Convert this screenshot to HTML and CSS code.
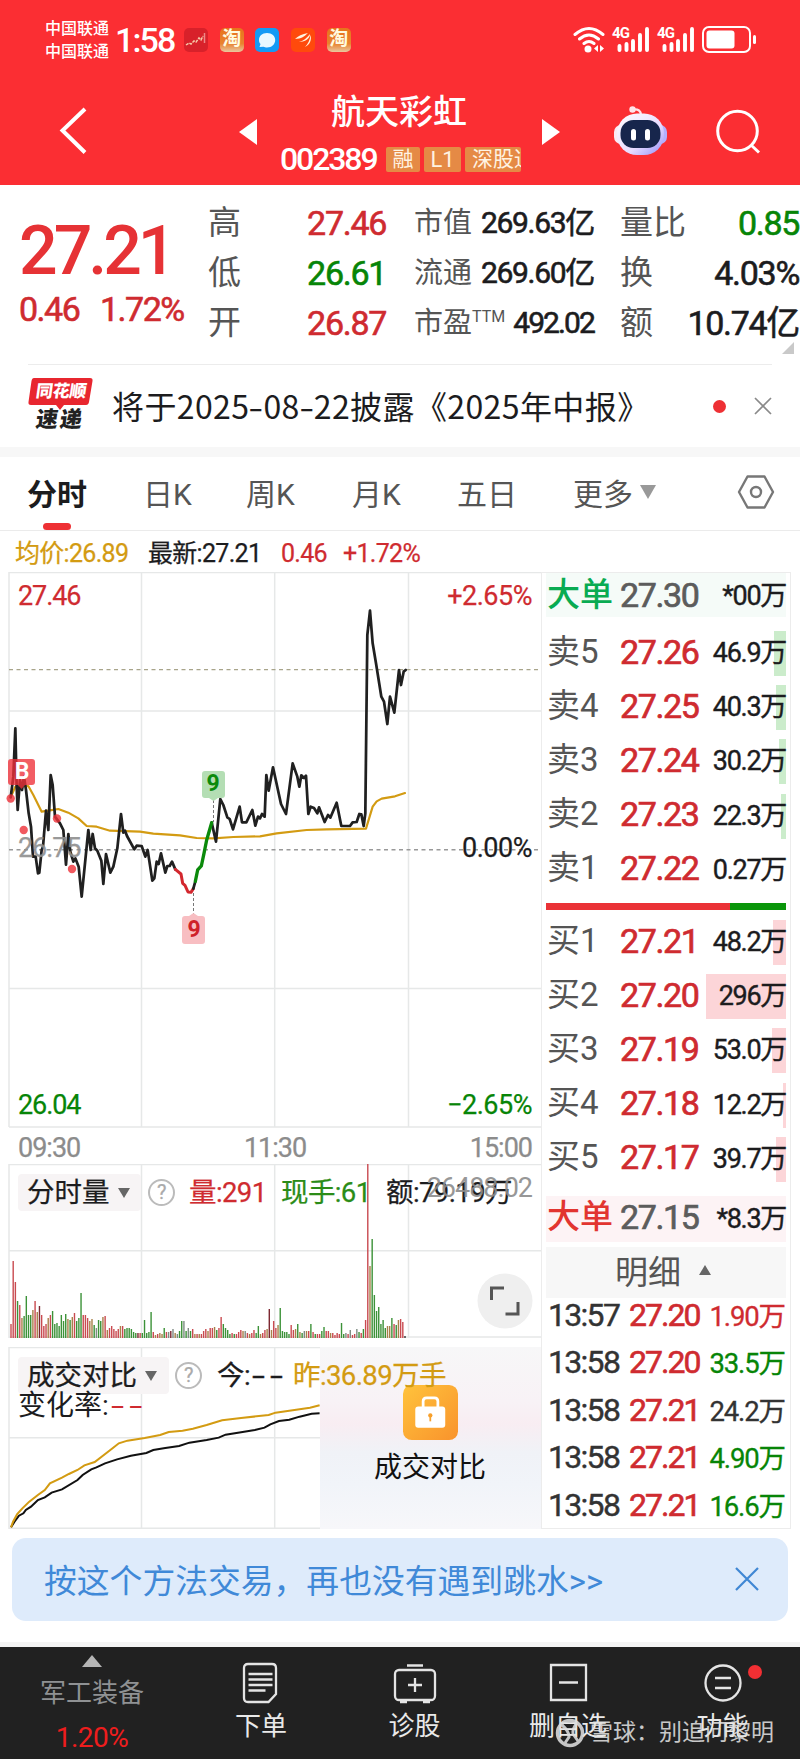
FILE: index.html
```html
<!DOCTYPE html>
<html lang="zh-CN">
<head>
<meta charset="utf-8">
<title>航天彩虹 002389</title>
<link rel="stylesheet" href="styles.css">
</head>
<body>
<header class="top">
  <div class="status">
    <div class="carriers"><span>中国联通</span><span>中国联通</span></div>
    <div class="clock">1:58</div>
    <div class="apps">
      <svg class="app" viewBox="0 0 24 24"><rect width="24" height="24" rx="5" fill="#d8212a"/><path d="M2 17l3-2 2 1 3-3 2 1 3-4 2 2 2-4" stroke="#f6c9a8" stroke-width="1.500" fill="none" stroke-dasharray="3 1"/><path d="M20.500 5v10" stroke="#e88" stroke-width="1.500"/></svg>
      <div class="app tao">淘</div>
      <svg class="app" viewBox="0 0 24 24"><rect width="24" height="24" rx="5" fill="#149af5"/><path d="M12 5c5 0 8.200 3 8.200 7S17 19.500 12 19.500c-1.500 0-2.500-.3-3.600-.8L4.500 19l1-3C4.500 15 4 13.800 4 12c0-4 3-7 8-7z" fill="#e9f8ff"/></svg>
      <svg class="app" viewBox="0 0 24 24"><rect width="24" height="24" rx="5" fill="#ff4a0c"/><path d="M4 11c3-3 7-5 13-6-3 3-7 6-13 6zM8 14c4-1 8-4 11-8 0 4-4 8-11 8zM14 19c3-3 5-7 5.500-12 1.500 5-1 10-5.500 12z" fill="#fff4e0"/></svg>
      <div class="app tao">淘</div>
    </div>
    <svg class="signals" viewBox="0 0 188 30">
      <g fill="none" stroke="#fff" stroke-width="3" stroke-linecap="round"><path d="M3 9.500q14-12 28 0M7.500 14q9.500-8 19 0M12 18.500q5-4 10 0"/></g>
      <circle cx="16" cy="24" r="3.500" fill="#fff"/><path d="M26 20v7l-4-3.500zM28 20v7l4-3.500z" fill="#fff"/>
      <g stroke="#fff" stroke-width="3.900" stroke-linecap="round"><path d="M47.500 21v4M54.500 19v6M61 16v9M68 10v15M75 4v21M92.500 21v4M99.500 19v6M106 16v9M113 10v15M120 4v21"/></g>
      <g class="g4"><text x="40" y="13">4G</text><text x="85" y="13">4G</text></g>
      <rect x="131" y="2" width="47" height="25" rx="6" fill="none" stroke="#fff" stroke-width="2"/><rect x="134.500" y="5.500" width="28" height="18" rx="3" fill="#fff"/><path d="M182.500 11.500v6" stroke="#fff" stroke-width="3" stroke-linecap="round"/>
    </svg>
  </div>
  <div class="titlebar">
    <svg class="back" viewBox="0 0 30 50"><path d="M26 4L3.500 25.500L26 47.500" fill="none" stroke="#fff" stroke-width="4"/></svg>
    <svg class="prev" viewBox="0 0 18 26"><path d="M18 0v26L0 13z" fill="#fff"/></svg>
    <div class="stock">
      <h1>航天彩虹</h1>
      <div class="codeline"><span class="code">002389</span><span class="tag">融</span><span class="tag l1">L1</span><span class="tag last">深股通</span></div>
    </div>
    <svg class="next" viewBox="0 0 18 26"><path d="M0 0v26l18-13z" fill="#fff"/></svg>
    <svg class="robot" viewBox="0 0 54 50">
      <defs><linearGradient id="rb" x1="0" y1="0" x2="1" y2="1"><stop offset="0" stop-color="#fff"/><stop offset=".6" stop-color="#e8dcff"/><stop offset="1" stop-color="#8f8cf8"/></linearGradient></defs>
      <circle cx="18.500" cy="3.500" r="3.200" fill="#ffe3ea"/><path d="M19 3.500q8-1 8 6" fill="none" stroke="#ffe3ea" stroke-width="2.200"/>
      <rect x="0" y="19" width="14" height="19" rx="7" fill="#fbeaf3"/><rect x="39" y="19" width="14" height="19" rx="7" fill="#b3b0ff"/>
      <rect x="3" y="7.500" width="47" height="41.500" rx="20" fill="url(#rb)"/><rect x="6.500" y="14" width="40" height="28" rx="13" fill="#17264c"/>
      <rect x="17" y="23" width="5" height="11.500" rx="2.500" fill="#fff"/><rect x="31" y="23" width="5" height="11.500" rx="2.500" fill="#fff"/>
    </svg>
    <svg class="search" viewBox="0 0 46 46"><circle cx="22.500" cy="22" r="19.800" fill="none" stroke="#fff" stroke-width="3"/><path d="M36 36l8 7.500" stroke="#fff" stroke-width="3"/></svg>
  </div>
</header>

<section class="quote">
  <div class="main"><div class="price">27.21</div><div class="chg"><span>0.46</span><span>1.72%</span></div></div>
  <dl class="c2"><dt>高</dt><dd class="r">27.46</dd><dt>低</dt><dd class="g">26.61</dd><dt>开</dt><dd class="r">26.87</dd></dl>
  <dl class="c3"><dt>市值</dt><dd>269.63亿</dd><dt>流通</dt><dd>269.60亿</dd><dt>市盈<sup>TTM</sup></dt><dd>492.02</dd></dl>
  <dl class="c4"><dt>量比</dt><dd class="g">0.85</dd><dt>换</dt><dd>4.03%</dd><dt>额</dt><dd>10.74亿</dd></dl>
  <i class="corner"></i>
</section>

<section class="news">
  <div class="logo"><svg viewBox="0 0 66 32"><path d="M6 0H62q3 0 2.500 3L61 24q-.5 3-3 3H36l-4 5-4-5H3q-3 0-2.500-3L3.500 3Q4 0 6 0z" fill="#e8262f"/></svg><b class="l-a">同花顺</b><b class="l-b">速递</b></div>
  <p>将于2025<u>-</u>08<u>-</u>22披露《2025年中报》</p>
  <i class="dot"></i>
  <svg class="x" viewBox="0 0 18 18"><path d="M1 1l16 16M17 1L1 17" stroke="#8a8a8a" stroke-width="1.700"/></svg>
</section>

<nav class="tabs">
  <span class="on">分时</span><span>日K</span><span>周K</span><span>月K</span><span>五日</span><span class="more">更多</span>
  <svg class="dd" viewBox="0 0 16 14"><path d="M0 0h16L8 14z" fill="#999"/></svg>
  <svg class="hex" viewBox="0 0 38 34"><path d="M10.500 1.500h17L36 17l-8.500 15.500h-17L2 17z" fill="none" stroke="#777" stroke-width="2.400" stroke-linejoin="round"/><circle cx="19" cy="17" r="5" fill="none" stroke="#777" stroke-width="2.400"/></svg>
</nav>

<main class="body">
  <div class="left">
    <div class="legend"><span class="gold">均价:26.89</span><span class="k">最新:27.21</span><span class="r">0.46</span><span class="r">+1.72%</span></div>

    <div class="chart">
      <svg class="plot" viewBox="0 572 541 556">
        <path class="grid" d="M9 572.500H541M9 711H541M9 988.500H541M9 1127H541M9 572V1127M141.500 572V1127M274.700 572V1127M408.500 572V1127"/>
        <path class="dash tan" d="M9 669.600H541"/><path class="dash" d="M9 849.800H541"/>
        <g transform="translate(0 660) scale(.33333)">
          <path class="ln avg" d="M32 412L46 380L85 378L100 405L125 455L145 452L175 447L205 458L235 475L260 498L290 500L330 512L420 515L460 521L540 526L590 534L640 535L700 531L780 529L830 520L920 510L980 508L1098 506L1118 440L1130 424L1145 416L1185 409L1215 399"/>
          <path class="ln px" d="M32 412L40 350L46 205L50 380L53 450L60 360L66 390L72 350L78 390L86 460L93 500L99 590L107 590L114 640L118 638L125 570L129 560L138 452L145 510L152 345L158 375L165 470L180 490L190 510L198 614L205 522L211 575L220 605L226 595L236 620L245 710L265 510L272 570L278 522L285 565L292 572L304 602L310 672L318 582L331 638L340 620L352 565L363 462L370 518L375 512L381 528L403 568L410 557L425 558L436 590L443 570L457 662L463 655L470 605L476 612L483 580L496 638L502 618L509 618L516 605L526 628"/>
          <path class="ln rd" d="M526 628L543 642L548 670L555 676L564 696L573 697L580 686"/>
          <path class="ln px" d="M580 686L586 664M635 488L648 545L661 417L670 435L682 472L689 477L699 508L719 440L726 487L739 487L757 450L766 497L774 470L780 475L786 462L794 470L799 345L806 392L819 322L843 432L858 462L878 310L892 350L898 380L904 346L912 354L918 347L925 462L932 440L942 444L952 460L957 442L974 486L984 465L991 473L1010 428L1024 498L1050 498L1058 487L1070 486L1078 462L1084 463L1091 498L1096 460L1102 -75L1110 -148L1118 -50L1128 10L1144 110L1152 125L1162 192L1170 110L1183 158L1197 30L1203 75L1211 35L1217 30"/>
          <path class="ln gn" d="M586 664L593 630L604 618L612 580L620 540L635 488"/>
        </g>
        <path class="lead" d="M213.500 800V822M193.500 893V914"/>
        <path d="M205 771h17q3 0 3 3v21q0 3-3 3h-4l-4.500 3-4.500-3h-4q-3 0-3-3v-21q0-3 3-3z" fill="#b4deb4"/>
        <path d="M185 916h4l4.500-3 4.500 3h4q3 0 3 3v22q0 3-3 3h-17q-3 0-3-3v-22q0-3 3-3z" fill="#f8bec2"/>
        <path d="M11 759h21q3 0 3 3v20q0 3-3 3h-7l-3.500 4-3.500-4h-7q-3 0-3-3v-20q0-3 3-3z" fill="#ee3038" opacity=".78"/>
        <g fill="#ee3038" opacity=".8"><circle cx="10.700" cy="798.500" r="4.200"/><circle cx="23.700" cy="830" r="4.200"/><circle cx="57" cy="818.500" r="4.200"/><circle cx="72" cy="869" r="4.200"/></g>
      </svg>
      <span class="lab hi r">27.46</span><span class="lab hi rt r">+2.65%</span>
      <span class="lab mid gray">26.75</span><span class="lab mid rt">0.00%</span>
      <span class="lab lo g">26.04</span><span class="lab lo rt g">−2.65%</span>
      <b class="mk b">B</b><b class="mk n1">9</b><b class="mk n2">9</b>
    </div>

    <div class="times"><span>09:30</span><span>11:30</span><span>15:00</span></div>

    <div class="vol">
      <svg class="plot" viewBox="0 1164 541 174"><path class="grid" d="M9 1164.500H541M9 1250.700H541M9 1337H541M9 1164V1338M141.500 1164V1338M274.700 1164V1338M408.500 1164V1338"/></svg>
      <div class="head"><span class="chip">分时量<i></i></span><em>?</em><span class="r">量:291</span><span class="g2">现手:61</span><span class="k">额:79.19万</span></div>
      <span class="max">26488.02</span>
      <svg class="plot" id="bars" viewBox="0 1164 541 174"></svg>
      <svg class="expand" viewBox="0 0 56 56"><circle cx="28" cy="28" r="27.500" fill="#efefef"/><path d="M14.500 27V15H27M41 29V41H28.500" fill="none" stroke="#555" stroke-width="3"/></svg>
    </div>

    <div class="cmp">
      <svg class="plot" viewBox="0 1347 541 182"><path class="grid" d="M9 1347.500H541M9 1437.700H541M9 1528.300H541M9 1347V1529M141.500 1347V1529M274.700 1347V1529"/>
        <g transform="translate(0 1340) scale(.3444 .33333)" fill="none" stroke-width="6">
          <path stroke="#111" d="M32 562L42 545L55 527L68 520L75 510L90 500L110 480L130 472L150 458L180 448L225 420L240 405L265 388L280 382L305 370L340 358L380 347L425 339L445 330L480 324L520 318L550 308L600 300L635 293L655 284L700 277L740 270L768 263L785 253L810 243L840 239L870 230L905 221L928 220"/>
          <path stroke="#d39b12" d="M32 562L38 545L50 522L65 505L85 485L110 465L130 450L145 430L180 413L200 402L225 390L245 376L275 366L295 350L325 326L345 310L370 302L420 294L465 285L490 276L530 272L560 266L600 255L645 241L700 234L780 225L800 218L850 211L900 203L928 196"/>
        </g></svg>
      <div class="lock"><svg viewBox="0 0 56 56"><defs><linearGradient id="lk" x1="0" y1="0" x2="1" y2="1"><stop offset="0" stop-color="#ffc33c"/><stop offset="1" stop-color="#f9932c"/></linearGradient></defs><rect width="56" height="56" rx="9" fill="url(#lk)"/><path d="M20.500 23V16.500q0-3.500 3.500-3.500h8q3.500 0 3.500 3.500V23" fill="none" stroke="#fff" stroke-width="2.800"/><rect x="12.500" y="22" width="30.500" height="21.500" rx="3" fill="#fff"/><circle cx="27.800" cy="31" r="2.200" fill="#f7a02c"/><path d="M27.800 31v6" stroke="#f7a02c" stroke-width="1.800"/></svg><span>成交对比</span></div>
      <div class="head"><span class="chip">成交对比<i></i></span><em>?</em><span class="k">今:<u>--</u></span><span class="gold">昨:36.89万手</span></div>
      <div class="rate">变化率:<u class="r">--</u></div>
    </div>
  </div>

  <aside class="book">
    <div class="row big sellbig"><span>大单</span><b>27.30</b><i>*00万</i></div>
    <div class="asks">
      <div class="row"><span>卖5</span><b>27.26</b><i>46.9万</i><s style="width:12px"></s></div>
      <div class="row"><span>卖4</span><b>27.25</b><i>40.3万</i><s style="width:10px"></s></div>
      <div class="row"><span>卖3</span><b>27.24</b><i>30.2万</i><s style="width:7px"></s></div>
      <div class="row"><span>卖2</span><b>27.23</b><i>22.3万</i><s style="width:5px"></s></div>
      <div class="row"><span>卖1</span><b>27.22</b><i>0.27万</i></div>
    </div>
    <div class="ratio"></div>
    <div class="bids">
      <div class="row"><span>买1</span><b>27.21</b><i>48.2万</i><s style="width:13px"></s></div>
      <div class="row"><span>买2</span><b>27.20</b><i>296万</i><s style="width:80px"></s></div>
      <div class="row"><span>买3</span><b>27.19</b><i>53.0万</i><s style="width:14px"></s></div>
      <div class="row"><span>买4</span><b>27.18</b><i>12.2万</i><s style="width:3px"></s></div>
      <div class="row"><span>买5</span><b>27.17</b><i>39.7万</i><s style="width:10px"></s></div>
    </div>
    <div class="row big buybig"><span>大单</span><b>27.15</b><i>*8.3万</i></div>
    <div class="detail">明细<svg viewBox="0 0 12 10"><path d="M6 0l6 10H0z" fill="#666"/></svg></div>
    <div class="ticks">
      <div><span>13:57</span><b>27.20</b><i class="r">1.90万</i></div>
      <div><span>13:58</span><b>27.20</b><i class="g">33.5万</i></div>
      <div><span>13:58</span><b>27.21</b><i>24.2万</i></div>
      <div><span>13:58</span><b>27.21</b><i class="g">4.90万</i></div>
      <div><span>13:58</span><b>27.21</b><i class="g">16.6万</i></div>
    </div>
  </aside>
</main>

<div class="banner"><span>按这个方法交易，再也没有遇到跳水&gt;&gt;</span><svg viewBox="0 0 24 24"><path d="M1 1l22 22M23 1L1 23" stroke="#3f87d4" stroke-width="2.200"/></svg></div>

<footer class="nav">
  <div class="sector"><svg viewBox="0 0 20 12"><path d="M10 0l10 12H0z" fill="#b5b5b5"/></svg><span>军工装备</span><b>1.20%</b></div>
  <div class="item"><svg viewBox="0 0 44 44"><path d="M9 3h24q4 0 4 4v26l-7.500 8H9q-4 0-4-4V7q0-4 4-4zM9.500 13h24M9.500 18.500h24M9.500 24h24M9.500 29.500h17" /></svg><span>下单</span></div>
  <div class="item"><svg viewBox="0 0 44 44"><rect x="2" y="9" width="40" height="30" rx="4"/><path d="M14 4.500h16M22 17v14M15 24h14M7 41h7M30 41h7"/></svg><span>诊股</span></div>
  <div class="item"><svg viewBox="0 0 44 44"><path d="M5 4h35v35H5zM13 21.500h19"/></svg><span>删自选</span></div>
  <div class="item"><svg viewBox="0 0 44 44"><circle cx="22" cy="22" r="17.500"/><path d="M14 17h16M14 27h16"/></svg><span>功能</span><i class="nd"></i></div>
  <div class="mark"><svg viewBox="0 0 30 30"><circle cx="15" cy="15" r="12.500" fill="none" stroke="#ddd" stroke-width="3.500"/><path d="M7 7q7 6 7 12l-4 6M22 5q-5 6-4 11l5 7" fill="none" stroke="#ddd" stroke-width="3"/></svg><span>雪球：别追问黎明</span></div>
</footer>
<script src="bars.js"></script>
</body>
</html>
```
FILE: styles.css
```css
*{box-sizing:border-box;margin:0;padding:0}
body{width:800px;height:1759px;overflow:hidden;background:#fff;font-family:Roboto,"Noto Sans CJK SC",sans-serif;color:#1c1c1e}
svg{display:block;flex:none}
i,em{font-style:normal}
u,s{text-decoration:none}
.r{color:#cf2b30}.g{color:#078507}.g2{color:#2b8c17}.k{color:#1c1c1e}.gold{color:#d39b12}

.top{height:184.500px;background:#fb2e33;color:#fff}
.status{height:80px;display:flex;align-items:center;padding-left:45px;position:relative}
.carriers{display:flex;flex-direction:column;width:70px;font-size:16px;line-height:23.500px;font-weight:500}
.clock{width:69px;font-size:34px;letter-spacing:-1.900px;font-weight:500}
.apps{display:flex;gap:11.700px;width:388px}
.app{width:24px;height:24px}
.tao{border-radius:5px;background:linear-gradient(#e8731c,#e9822e 65%,#e9c8a0);font-size:19px;line-height:22px;text-align:center;font-weight:700;color:#fffbe0}
.signals{width:188px;height:30px}
.g4{font-size:15px;font-weight:700;fill:#fff;letter-spacing:-.8px}
.titlebar{height:104px;display:flex;align-items:flex-start}
.back{width:30px;height:50px;margin:25px 0 0 59px}
.prev{width:18px;height:26px;margin:39px 0 0 150px}
.stock{width:242px;margin-left:23px;height:100px;padding-top:7px}
.stock h1{font-size:34px;line-height:50px;height:50px;font-weight:500;padding-left:51px}
.codeline{display:flex;align-items:center;height:44px;gap:4px;overflow:hidden}
.code{font-size:32px;font-weight:500;letter-spacing:-2.100px;width:102px;line-height:44px}
.tag{height:25px;flex:none;background:#e58a45;border-radius:2px;font-size:21px;line-height:25px;width:34px;text-align:center;color:#fff3e2}
.tag.l1{width:37px;font-size:22px}.tag.last{width:56px;overflow:hidden;white-space:nowrap;text-align:left;padding-left:7px}
.next{width:18px;height:26px;margin:39px 0 0 20px}
.robot{width:54px;height:50px;margin:26px 0 0 54px}
.search{width:46px;height:46px;margin:29px 0 0 47px}

.quote{height:179.500px;display:flex;padding-top:13px;position:relative}
.main{width:208px;padding-left:19px;color:#cf2b30}
.price{font-size:68px;line-height:76px;margin-top:15px;font-weight:500;letter-spacing:-4px;color:#e63235}
.chg{display:flex;font-size:34px;line-height:38px;letter-spacing:-1.500px;padding-top:1px}
.chg span:first-child{width:81px}
.quote dl{display:grid;grid-template-rows:repeat(3,50.400px);align-items:center;line-height:50px;font-size:34px}
.quote dt{color:#555;font-size:33px;white-space:nowrap}
.quote dd{text-align:right;letter-spacing:-1.300px;-webkit-text-stroke:.6px;white-space:nowrap}
.c2{width:178px;grid-template-columns:60px 118px}
.quote .c2 dd,.chg{-webkit-text-stroke:.6px}
.c3{width:208px;padding-left:28px;grid-template-columns:55px 125px}
.quote .c3 dt{font-size:29px}.quote .c3 dd{font-size:30px}
.c3 sup{font-size:16px;vertical-align:top;position:relative;top:-6px}
.quote .c3 dd:last-child{letter-spacing:-1.900px}
.c4{width:205px;padding-left:26px;grid-template-columns:60px 119px}
.corner{position:absolute;right:6px;top:157px;border:6.500px solid;border-color:transparent #c9c9c9 #c9c9c9 transparent}

.news{height:83px;margin:0 28px;border-top:1px solid #ececec;display:flex;align-items:center;position:relative}
.logo{width:66px;height:54px;margin-top:-2px;position:relative;color:#222}
.logo svg{width:66px;height:32px}
.logo b{position:absolute;transform:skewX(-8deg);white-space:nowrap;font-weight:900}
.l-a{left:8px;top:1px;font-size:17px;line-height:25px;color:#fff;letter-spacing:-.300px}
.l-b{left:8px;top:29px;font-size:22px;line-height:26px;letter-spacing:2px}
.news p{margin:-3px 0 0 18px;font:400 32px/48px "Noto Sans CJK SC",sans-serif;letter-spacing:.400px;width:601px;white-space:nowrap}
.news u{display:inline-block;width:14px;text-align:center;transform:scaleX(1.35)}
.dot{width:13px;height:13px;border-radius:50%;background:#ee3034}
.news .x{width:18px;height:18px;margin-left:28px}

.tabs{height:84px;border-top:10px solid #f7f7f7;border-bottom:1px solid #ebebeb;display:grid;grid-template-columns:116px 103px 106px 105px 116px 67px 97px 1fr;padding-left:27px;padding-bottom:3px;align-items:center;font-size:30px;color:#555;position:relative}
.tabs .on{font-weight:700;color:#1c1c1e}
.tabs .on::after{content:"";position:absolute;left:43px;bottom:0;width:28px;height:7px;border-radius:4px;background:#ee3034}
.dd{width:16px;height:14px}.hex{width:38px;height:34px}

.body{display:flex;height:998px}
.left{width:541px}
.legend{height:41px;display:grid;grid-template-columns:133px 133px 62px 100px;padding-left:15px;align-items:center;font-size:25px;line-height:41px;letter-spacing:-.700px;padding-top:2px}
.legend,.lab,.head,.times{-webkit-text-stroke:.25px}
.chart,.vol,.cmp{position:relative;width:541px}
.chart{height:556px}
.plot{position:absolute;left:0;top:0;width:541px;height:100%}
.grid{fill:none;stroke:#e6e8e8;stroke-width:1.500}
.dash{fill:none;stroke:#999;stroke-width:1.400;stroke-dasharray:4 3.500}
.tan{stroke:#a8a48a}
.lead{stroke:#777;stroke-dasharray:3 2}
.ln{fill:none;stroke-width:8.200;stroke-linejoin:round;stroke-linecap:round}
.px{stroke:#202020}.avg{stroke:#d39b12;stroke-width:6.500}.rd{stroke:#d3272e;stroke-width:9}.gn{stroke:#0b8a0b;stroke-width:10}
.lab{position:absolute;left:18px;font-size:27px;line-height:32px;letter-spacing:-1.100px}
.lab.rt{left:auto;right:9px;letter-spacing:-.500px}
.hi{top:8px}.mid{top:260px}.lo{top:517px}
.gray{color:#8f8f8f;opacity:.9}
.mk{position:absolute;width:28px;text-align:center;font-size:23px;line-height:26px}
.mk.b{left:8px;top:187px;color:#fff}.n1{left:199px;top:199px;color:#0b8a0b}.n2{left:180px;top:345px;color:#cf2229}
.times{height:36px;display:flex;justify-content:space-between;padding:3px 9px 0 18px;font-size:27px;line-height:34px;color:#8c8c8c;letter-spacing:-1px}
.vol{height:183px}.vol .plot{height:174px}
.head{position:absolute;left:18px;top:9px;height:37px;display:grid;grid-template-columns:130px 41px 92px 105px 130px;align-items:center;font-size:27.500px;line-height:39px;letter-spacing:-.600px;white-space:nowrap}
.chip{width:123px;height:37px;background:#f7f4f5;border-radius:4px;padding-left:9px;letter-spacing:0;font-size:27.500px;display:flex;align-items:center;gap:8px}
.chip i{border:6.500px solid transparent;border-top:10px solid #666;border-bottom:0}
.head em{width:27px;height:27px;border:2px solid #bbb;border-radius:50%;color:#aaa;font-size:20px;line-height:23px;text-align:center}
.max{position:absolute;right:9px;top:8px;font-size:27px;line-height:32px;color:#8c8c8c;letter-spacing:-1px;opacity:.9}
.expand{position:absolute;left:477px;top:109px;width:56px;height:56px}
.cmp{height:182px}
.cmp .chip{width:151px}.cmp .head{grid-template-columns:157px 42px 76px 160px}
.cmp u{display:inline-block;transform:scaleX(1.7);transform-origin:0 50%;letter-spacing:3px;margin-left:2px}
.rate{position:absolute;left:18px;top:40px;font-size:28px;line-height:38px}
.lock{position:absolute;left:320px;top:0;width:221px;height:182px;background:linear-gradient(#f7f7f8,#f8f2f6 30%,#f8edf2 42%,#f0f2f7 58%,#f1f4f9 75%,#f7f7fa);padding-top:38px}
.lock svg{width:55px;height:55px;margin-left:83px}
.lock span{display:block;margin:8px 0 0 54px;font-size:28px;line-height:40px;color:#111}

.book{width:250px;border:1px solid #ececec;padding:0 4px;height:957px;margin-top:41px}
.book i,.book b{font-weight:400}
.row{display:grid;grid-template-columns:73px 80px 1fr;height:54.200px;align-items:center;position:relative;padding-left:1px;line-height:46px;white-space:nowrap}
.row span{font-size:33px;color:#555;margin-top:-3px}
.row b{font-size:34px;color:#cf2b30;letter-spacing:-1.400px;margin-top:-3px;-webkit-text-stroke:.7px}
.row i{font-size:27px;text-align:right;letter-spacing:-1.300px;position:relative;z-index:1;-webkit-text-stroke:.4px}
.row s{position:absolute;right:0;top:5px;height:45px}
.asks s{background:#cbeccb}.bids s{background:#fcd5d8}
.big{height:44px}.big span{font-weight:500}.big b{color:#5c5c5c}
.sellbig{background:#f5fbf8}.sellbig span{color:#09ab52}
.buybig{background:#fdf3f5;height:46px}.buybig span{color:#e23530}
.asks{padding-top:9px}
.ratio{height:7px;margin-top:6px;background:linear-gradient(90deg,#ea3236 76.500%,#0a960a 0)}
.bids{padding-top:5px;height:286px}
.detail{margin-top:5px;height:51px;background:#f7f7f7;display:flex;align-items:center;gap:18px;padding:0 0 4px 69px;font-size:33px;color:#555}
.detail svg{width:12px;height:10px}
.ticks div{display:grid;grid-template-columns:79px 74px 1fr;height:47.500px;line-height:34px;padding-left:2px;white-space:nowrap}
.ticks span{font-size:32px;letter-spacing:-1.700px;color:#333;-webkit-text-stroke:.4px}
.ticks b{font-size:32px;letter-spacing:-2px;color:#cf2b30;padding-left:2px;-webkit-text-stroke:.6px}
.ticks i{font-size:27.500px;text-align:right;letter-spacing:-1.100px;padding:2px 1px 0 0;color:#333;-webkit-text-stroke:.3px}
.ticks i.r{color:#cf2b30}.ticks i.g{color:#078507}

.banner{height:83px;margin:9px 12px 0;border-radius:14px;background:#deebfb;display:flex;align-items:center;justify-content:space-between;padding:0 29px 2px 32px;color:#4089d8;font-size:32.800px}
.banner svg{width:24px;height:24px}

.nav{height:117px;margin-top:21px;border-top:5px solid #f4f4f4;background:#212121;display:grid;grid-template-columns:184px 154px 153px 154px 155px;position:relative}
.sector{display:flex;flex-direction:column;align-items:center;color:#8f9193;font-size:26px;padding-top:8px}
.sector svg{width:20px;height:12px}
.sector span{line-height:38px;margin-top:7px}
.sector b{font-weight:400;color:#ee1d1d;font-size:28px;line-height:40px;margin-top:6px;letter-spacing:-.500px}
.item{display:flex;flex-direction:column;align-items:center;padding-top:14px;font-size:26px;color:#e9e9e9;position:relative}
.item svg{width:44px;height:44px;fill:none;stroke:#e4e4e4;stroke-width:2.300}
.item span{line-height:38px;margin-top:2px}
.nd{position:absolute;left:103px;top:18px;width:14px;height:14px;border-radius:50%;background:#f22f33}
.mark{position:absolute;left:555px;top:71px;display:flex;align-items:center;color:#e0e0e0;font-size:23px;line-height:30px;opacity:.88}
.mark svg{width:30px;height:30px;margin-right:5px}
```
FILE: bars.js
```js
// Minute volume bars: colour key followed by bar height in pixels.
const data = (
  "r14 r77 r56 g37 r33 o20 g22 g42 g23 g23 o28 r37 o26 d32 r23 r12 r14 o20 r23 g27 g14 g15 g12 g23 g17 g24 o19 g18 o21 r25 " +
  "g17 g20 g45 r23 r23 r20 o17 o19 g13 x10 g18 g17 o21 r22 o8 r10 r12 r9 r7 r9 o12 r12 g9 g10 g10 g9 g6 g5 d5 r5 " +
  "g5 g18 g5 g6 g26 r6 o3 r4 o5 o4 g10 r6 x6 d7 x9 o5 x4 g7 g17 x17 g7 x10 g7 r9 o4 r4 o4 r4 r7 r9 " +
  "o7 r10 r10 o11 g8 r10 r21 g14 g10 g8 g4 r5 g4 r4 r6 r8 o7 x7 r5 o4 r5 r8 g5 g12 o4 r5 r8 o9 d29 o8 " +
  "r17 r10 o13 g30 g7 g6 g6 g4 r13 r8 o9 g14 o6 g5 x7 o7 r7 g14 r6 g4 r4 r4 g7 g11 r7 r7 o5 r5 r3 r5 " +
  "r4 g15 g4 x5 r4 x8 r3 r4 x9 g6 r5 g9 r18 r174 o72 g99 g43 g27 g31 g14 g18 g10 o12 o12 g20 r14 g13 o18 r19 r16 k2"
).split(" ");
const colors = { r: "#c94a50", g: "#3c9238", o: "#a8804a", d: "#7c2730", x: "#7f8c84", k: "#333333" };
const root = document.getElementById("bars");
data.forEach((item, i) => {
  const h = Number(item.slice(1));
  const bar = document.createElementNS("http://www.w3.org/2000/svg", "rect");
  bar.setAttribute("x", (10.3 + i * 394 / (data.length - 1)).toFixed(2));
  bar.setAttribute("y", 1338 - h);
  bar.setAttribute("width", 1.4);
  bar.setAttribute("height", h);
  bar.setAttribute("fill", colors[item[0]]);
  root.appendChild(bar);
});
```
